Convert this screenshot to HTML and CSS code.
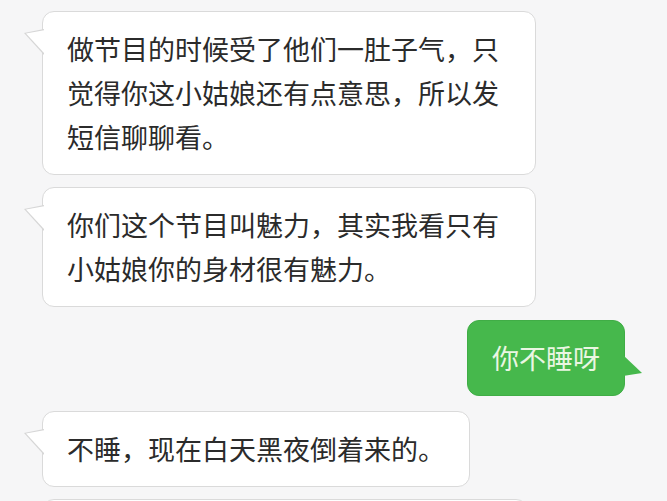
FILE: index.html
```html
<!DOCTYPE html>
<html>
<head>
  <meta charset="utf-8">
  <title>短信</title>
  <link rel="stylesheet" href="styles.css">
</head>
<body>
  <div class="chat">
    <div class="row in">
      <div class="bubble">做节目的时候受了他们一肚子气，只觉得你这小姑娘还有点意思，所以发短信聊聊看。</div>
    </div>
    <div class="row in">
      <div class="bubble">你们这个节目叫魅力，其实我看只有小姑娘你的身材很有魅力。</div>
    </div>
    <div class="row out">
      <div class="bubble">你不睡呀</div>
    </div>
    <div class="row in">
      <div class="bubble">不睡，现在白天黑夜倒着来的。</div>
    </div>
    <div class="row in">
      <div class="bubble partial"></div>
    </div>
  </div>
</body>
</html>
```

FILE: styles.css
```css
html, body {
  margin: 0;
  height: 100%;
  overflow: hidden;
}

body {
  background: #f6f6f7;
  font-family: "Noto Sans CJK SC", "Noto Sans", sans-serif;
  font-size: 27px;
  color: #2b2b2b;
}

.chat {
  display: flex;
  flex-direction: column;
  padding: 11px 42px 0;
}

.row {
  display: flex;
  margin-bottom: 12px;
}

.row.out {
  justify-content: flex-end;
  margin-top: 1px;
  margin-bottom: 15px;
}

.bubble {
  position: relative;
  max-width: 494px;
  box-sizing: border-box;
  padding: 15px 24px;
  line-height: 44px;
  background: #fff;
  border: 1px solid #dadada;
  border-radius: 12px;
}

.bubble.partial {
  width: 486px;
  height: 76px;
}

/* left tail */
.in .bubble::before,
.in .bubble::after {
  content: "";
  position: absolute;
  left: -19px;
  top: 17px;
  width: 20px;
  height: 26px;
}

.in .bubble::before {
  background: #d6d6d6;
  clip-path: polygon(0 4px, 100% 0, 100% 100%);
}

.in .bubble::after {
  background: #fff;
  clip-path: polygon(2px 4.6px, 100% 1.3px, 100% calc(100% - 2px));
}

.out .bubble {
  background: #46b84c;
  border-color: #40ad46;
  color: #eaf6e2;
  padding: 15px 24px;
}

.out .bubble::after {
  content: "";
  position: absolute;
  right: -18px;
  top: 34px;
  width: 19px;
  height: 21px;
  background: #46b84c;
  clip-path: polygon(0 0, 100% 18px, 0 100%);
}
```
